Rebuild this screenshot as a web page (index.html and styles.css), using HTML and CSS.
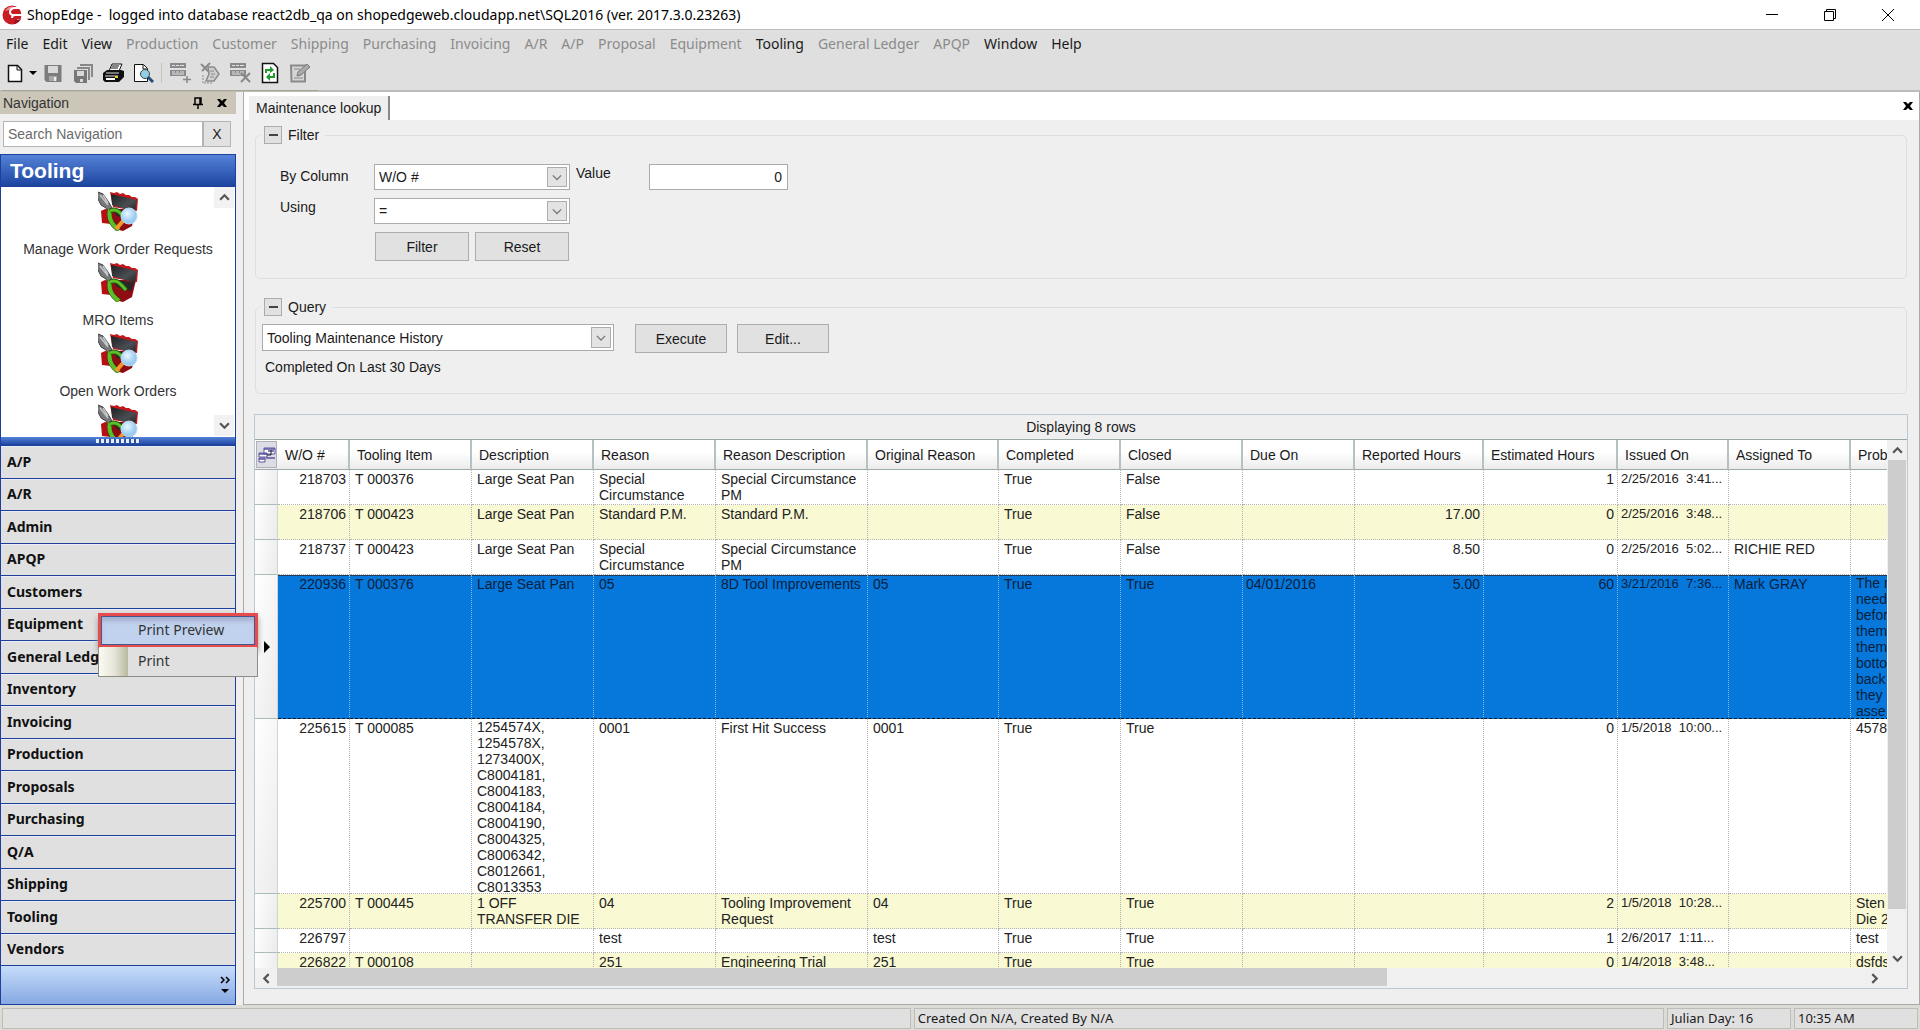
FILE: index.html
```html
<!DOCTYPE html>
<html lang="en">
<head>
<meta charset="utf-8">
<title>ShopEdge</title>
<link rel="stylesheet" href="styles.css">
</head>
<body>
<svg class="defs" aria-hidden="true">
  <defs>
    <linearGradient id="box" x1="0" y1="0" x2="1" y2="1"><stop offset="0" stop-color="#1d1f22"/><stop offset=".6" stop-color="#4a4d52"/><stop offset="1" stop-color="#222"/></linearGradient>
    <radialGradient id="glass" cx=".4" cy=".35"><stop offset="0" stop-color="#eaf7ff"/><stop offset="1" stop-color="#9accf2"/></radialGradient>
    <symbol id="tool" viewBox="0 0 40 40">
      <path d="M3 20l4-2 6 1v14l-9-1z" fill="#b80f14"/>
      <path d="M12 18l26 0-4 17-9 5-8-2-5-6z" fill="#8f0c12"/>
      <path d="M12 1l4 1 3-1 3 2 3-1 3 2 3 0 3 2 3 0 3 2-1 12-24-4z" fill="#c4161b"/>
      <path d="M13 3l26 6-2 12-23-7z" fill="url(#box)"/>
      <path d="M14 17l22 4-3 8-14-4z" fill="#26282b"/>
      <path d="M0 1l5 2 5 7 4 7 0 4-3 0-3-4-5-3-4-8z" fill="#77797b" stroke="#3f4143"/>
      <path d="M2 4l8 10M5 4l5 8" stroke="#c3c5c6" stroke-width="1.5"/>
      <path d="M12 19c-2 8 2 15 9 20" fill="none" stroke="#234d12" stroke-width="5"/>
      <path d="M12 19c-2 8 2 15 9 20" fill="none" stroke="#5cbf26" stroke-width="4"/>
      <path d="M12 20c6-3 10 1 16 8" fill="none" stroke="#234d12" stroke-width="5"/>
      <path d="M12 20c6-3 10 1 16 8" fill="none" stroke="#5cbf26" stroke-width="3"/>
    </symbol>
    <symbol id="tool-find" viewBox="0 0 40 40">
      <use href="#tool"/>
      <path d="M18 38l7-8" stroke="#f0982c" stroke-width="4"/>
      <circle cx="31" cy="25" r="8" fill="url(#glass)" stroke="#b7d9ee"/>
    </symbol>
    <symbol id="up" viewBox="0 0 10 10"><path d="M1 7l4-4 4 4" fill="none" stroke="#555" stroke-width="2"/></symbol>
    <symbol id="down" viewBox="0 0 10 10"><path d="M1 3l4 4 4-4" fill="none" stroke="#555" stroke-width="2"/></symbol>
    <symbol id="left" viewBox="0 0 10 10"><path d="M7 1L3 5l4 4" fill="none" stroke="#555" stroke-width="2"/></symbol>
    <symbol id="right" viewBox="0 0 10 10"><path d="M3 1l4 4-4 4" fill="none" stroke="#555" stroke-width="2"/></symbol>
    <symbol id="drop" viewBox="0 0 12 12"><path d="M1 4l5 5 5-5" fill="none" stroke="#777" stroke-width="1.5"/></symbol>
    <symbol id="cross" viewBox="0 0 12 12"><path d="M1 2h3l2 2 2-2h3L8 6l3 4H8L6 8l-2 2H1l3-4z" fill="#000"/></symbol>
    <symbol id="rows" viewBox="0 0 22 22">
      <path d="M1 1h16v5H1zM1 8h16v6H1z" fill="#8a8a8a"/>
      <path d="M3 3.500h3M7 3.500h3M11 3.500h4M3 10h3M7 10h3M11 10h4M3 12h12" stroke="#e4e4e4"/>
    </symbol>
  </defs>
</svg>

<header class="titlebar">
  <svg class="logo" viewBox="0 0 20 20"><circle cx="10" cy="10" r="9.500" fill="#c81d25"/><path d="M3 6Q8-1 13 3 8 5 3 6z" fill="#f08a8a"/><path d="M20 3h-8q-4 1-4 4t4 3h8M20 10h-7q-3 0-3 3M20 15h-5" fill="none" stroke="#fff" stroke-width="2"/><path d="M12 19q5-1 7-5l-6 1z" fill="#9c1118"/></svg>
  <h1 class="caption">ShopEdge - &nbsp;logged into database react2db_qa on shopedgeweb.cloudapp.net\SQL2016 (ver. 2017.3.0.23263)</h1>
  <button class="win" aria-label="Minimize"><svg viewBox="0 0 14 14"><path d="M1 6.500h12" stroke="#000"/></svg></button>
  <button class="win" aria-label="Restore"><svg viewBox="0 0 14 14"><path d="M1.500 3.500h9v9h-9zM3.500 3.500v-2h9v9h-2" fill="none" stroke="#000"/></svg></button>
  <button class="win" aria-label="Close"><svg viewBox="0 0 14 14"><path d="M1 1l12 12M13 1L1 13" stroke="#000"/></svg></button>
</header>

<nav class="menubar">
  <button>File</button><button>Edit</button><button>View</button><button disabled>Production</button><button disabled>Customer</button><button disabled>Shipping</button><button disabled>Purchasing</button><button disabled>Invoicing</button><button disabled>A/R</button><button disabled>A/P</button><button disabled>Proposal</button><button disabled>Equipment</button><button>Tooling</button><button disabled>General Ledger</button><button disabled>APQP</button><button>Window</button><button>Help</button>
</nav>

<div class="toolbar-row">
  <div class="toolbar">
    <button aria-label="New"><svg viewBox="0 0 22 22"><path d="M4.500 3.500h9l4 4v12h-13z" fill="#fff" stroke="#111" stroke-width="1.500"/><path d="M13 4v4h4" fill="none" stroke="#111"/></svg></button>
    <button class="slim" aria-label="New options"><svg viewBox="0 0 8 8"><path d="M0 2h8L4 6z"/></svg></button>
    <button aria-label="Save"><svg viewBox="0 0 22 22"><path d="M2.500 3h17v17h-15l-2-2z" fill="#7d7d7d"/><path d="M6 4h10v7H6z" fill="#d9d9d9"/><path d="M7 14h8v5H7z" fill="#a8a8a8"/><path d="M12 15h2v4h-2z" fill="#eee"/></svg></button>
    <button aria-label="Save all"><svg viewBox="0 0 22 22"><path d="M8 2h13v13h-2V4H8zM5 5h13v13h-2V7H5z" fill="#888"/><path d="M2 8h13v13H4l-2-2z" fill="#777"/><path d="M5 9h7v5H5zM8 17h3v3H8z" fill="#d9d9d9"/></svg></button>
    <button aria-label="Print"><svg viewBox="0 0 22 22"><path d="M7 9l3-7h10l-3 7z" fill="#fff" stroke="#111"/><path d="M10 4h7M9 6h7" stroke="#111"/><path d="M1 11l4-3h14l3 1v6l-5 5H3l-2-2z" fill="#111"/><path d="M4 11h13M3 14h13" stroke="#ddd"/><path d="M4 17h9" stroke="#fff" stroke-width="2"/><path d="M13 15h3" stroke="#e8d020" stroke-width="2"/></svg></button>
    <button aria-label="Print preview"><svg viewBox="0 0 22 22"><path d="M2.500 2.500h9l4 4v13h-13z" fill="#fff" stroke="#111"/><path d="M11 3v4h4" fill="none" stroke="#111"/><circle cx="13" cy="12" r="4.500" fill="#8fd0e4" stroke="#444"/><path d="M16 15l5 5" stroke="#234e78" stroke-width="3"/></svg></button>
    <span class="sep"></span>
    <button disabled aria-label="Add row"><svg viewBox="0 0 22 22"><use href="#rows"/><path d="M18 14v7M14 17.500h8" stroke="#888" stroke-width="1.500"/></svg></button>
    <button disabled aria-label="Cut row"><svg viewBox="0 0 22 22"><path d="M2 2l8 8M11 1L3 9" stroke="#8a8a8a" stroke-width="2"/><path d="M9 5h6l5 7-5 7H7l3-7z" fill="#cfcfcf" stroke="#8a8a8a" stroke-width="1.500"/><path d="M11 9h4M12 12h4M11 15h4" stroke="#8a8a8a"/><path d="M4 13v8h10" fill="none" stroke="#8a8a8a" stroke-dasharray="2 1"/></svg></button>
    <button disabled aria-label="Delete row"><svg viewBox="0 0 22 22"><use href="#rows"/><path d="M12 11l9 9M21 11l-9 9" stroke="#888" stroke-width="2"/></svg></button>
    <button aria-label="Refresh"><svg viewBox="0 0 22 22"><path d="M3.500 1.500h11l4 4v15h-15z" fill="#fff" stroke="#111" stroke-width="1.500"/><path d="M7 11V8h5M15 11v4h-5" fill="none" stroke="#1f9a2c" stroke-width="2"/><path d="M11 4l4 4-4 3zM11 11l-4 4 4 4z" fill="#1f9a2c"/></svg></button>
    <button disabled aria-label="Edit"><svg viewBox="0 0 22 22"><path d="M2 3.500h14v16H2.500z" fill="#d4d4d4" stroke="#8a8a8a" stroke-width="2"/><path d="M5 16h9M5 7h6" stroke="#8a8a8a"/><path d="M8 14l1-4 9-8 3 3-9 8z" fill="#aaa" stroke="#777"/></svg></button>
  </div>
</div>

<main class="work">
  <aside class="side">
    <div class="side-head"><h2>Navigation</h2>
      <button aria-label="Pin"><svg viewBox="0 0 12 12"><path d="M3 7V1h6v6M1 7.500h10M6 7v5M8 1v6" fill="none" stroke="#000" stroke-width="1.500"/></svg></button>
      <button aria-label="Close navigation"><svg viewBox="0 0 12 12"><use href="#cross"/></svg></button>
    </div>
    <div class="search"><input type="text" placeholder="Search Navigation" aria-label="Search Navigation"><button>X</button></div>
    <section class="outlook">
      <h2 class="band">Tooling</h2>
      <div class="tiles">
        <a href="#" class="tile"><svg><use href="#tool-find"/></svg>Manage Work Order Requests</a>
        <a href="#" class="tile"><svg><use href="#tool"/></svg>MRO Items</a>
        <a href="#" class="tile"><svg><use href="#tool-find"/></svg>Open Work Orders</a>
        <a href="#" class="tile" aria-label="More tooling"><svg><use href="#tool-find"/></svg></a>
        <button class="step top" aria-label="Scroll up"><svg><use href="#up"/></svg></button>
        <button class="step bottom" aria-label="Scroll down"><svg><use href="#down"/></svg></button>
      </div>
      <div class="splitter"><span></span></div>
      <div class="cats">
        <button>A/P</button><button>A/R</button><button>Admin</button><button>APQP</button><button>Customers</button><button>Equipment</button><button>General Ledger</button><button>Inventory</button><button>Invoicing</button><button>Production</button><button>Proposals</button><button>Purchasing</button><button>Q/A</button><button>Shipping</button><button>Tooling</button><button>Vendors</button>
      </div>
      <div class="overflow"><button aria-label="Configure buttons"><svg viewBox="0 0 12 20"><path d="M2 2l3 3-3 3M7 2l3 3-3 3" fill="none" stroke="#000" stroke-width="1.500"/><path d="M2 14h8l-4 4z"/></svg></button></div>
    </section>
  </aside>

  <section class="doc">
    <div class="tabs"><button class="tab">Maintenance lookup</button><button class="tab-close" aria-label="Close tab"><svg><use href="#cross"/></svg></button></div>
    <div class="doc-body">
      <fieldset class="group">
        <legend><button class="toggle" aria-label="Collapse filter"></button>Filter</legend>
        <div class="filter">
          <label for="col" class="mid">By Column</label>
          <span class="combo"><select id="col"><option>W/O #</option></select><svg><use href="#drop"/></svg></span>
          <label for="val">Value</label>
          <input id="val" class="num" type="text" value="0">
          <label for="op">Using</label>
          <span class="combo"><select id="op"><option>=</option></select><svg><use href="#drop"/></svg></span>
          <div class="actions"><button class="btn">Filter</button><button class="btn">Reset</button></div>
        </div>
      </fieldset>
      <fieldset class="group query">
        <legend><button class="toggle" aria-label="Collapse query"></button>Query</legend>
        <div class="query-row">
          <span class="combo wide"><select aria-label="Query"><option>Tooling Maintenance History</option></select><svg><use href="#drop"/></svg></span>
          <button class="btn">Execute</button><button class="btn">Edit...</button>
        </div>
        <p>Completed On Last 30 Days</p>
      </fieldset>

      <div class="grid">
        <div class="grid-caption">Displaying 8 rows</div>
        <div class="grid-main">
          <div class="viewport">
            <table>
              <colgroup><col class="w-mark"><col class="w-wo"><col class="w-text"><col class="w-text"><col class="w-text"><col class="w-reason"><col class="w-orig"><col class="w-text"><col class="w-text"><col class="w-due"><col class="w-rep"><col class="w-est"><col class="w-date"><col class="w-text"><col class="w-prob"></colgroup>
              <thead><tr><th class="chooser"><button aria-label="Choose columns"><svg viewBox="0 0 18 18"><path d="M6 2h11v6H6zM1 7h8v4H1zM1 12h6v4H1z" fill="#fff" stroke="#5a55a0"/><path d="M6 3h11M1 8h8M1 13h6M8 12h9M10 5h6" stroke="#5a55a0" stroke-width="1.500"/><path d="M9 9h4V4" fill="none" stroke="#223"/></svg></button></th><th>W/O #</th><th>Tooling Item</th><th>Description</th><th>Reason</th><th>Reason Description</th><th>Original Reason</th><th>Completed</th><th>Closed</th><th>Due On</th><th>Reported Hours</th><th>Estimated Hours</th><th>Issued On</th><th>Assigned To</th><th>Prob</th></tr></thead>
              <tbody>
                <tr class="two"><th></th><td class="r">218703</td><td>T 000376</td><td>Large Seat Pan</td><td>Special Circumstance</td><td>Special Circumstance PM</td><td></td><td>True</td><td>False</td><td></td><td></td><td class="r">1</td><td class="date">2/25/2016  3:41...</td><td></td><td></td></tr>
                <tr class="two alt"><th></th><td class="r">218706</td><td>T 000423</td><td>Large Seat Pan</td><td>Standard P.M.</td><td>Standard P.M.</td><td></td><td>True</td><td>False</td><td></td><td class="r">17.00</td><td class="r">0</td><td class="date">2/25/2016  3:48...</td><td></td><td></td></tr>
                <tr class="two"><th></th><td class="r">218737</td><td>T 000423</td><td>Large Seat Pan</td><td>Special Circumstance</td><td>Special Circumstance PM</td><td></td><td>True</td><td>False</td><td></td><td class="r">8.50</td><td class="r">0</td><td class="date">2/25/2016  5:02...</td><td>RICHIE RED</td><td></td></tr>
                <tr class="nine selected"><th><svg viewBox="0 0 6 12"><path d="M0 0l6 6-6 6z"/></svg></th><td class="r">220936</td><td>T 000376</td><td>Large Seat Pan</td><td>05</td><td class="one">8D Tool Improvements</td><td>05</td><td>True</td><td>True</td><td class="due">04/01/2016</td><td class="r">5.00</td><td class="r">60</td><td class="date">3/21/2016  7:36...</td><td>Mark GRAY</td><td class="tall"><div class="lines">The r<br>need<br>befor<br>them<br>them<br>botto<br>back<br>they<br>asse</div></td></tr>
                <tr class="eleven"><th></th><td class="r">225615</td><td>T 000085</td><td class="tall"><div class="lines">1254574X,<br>1254578X,<br>1273400X,<br>C8004181,<br>C8004183,<br>C8004184,<br>C8004190,<br>C8004325,<br>C8006342,<br>C8012661,<br>C8013353</div></td><td>0001</td><td>First Hit Success</td><td>0001</td><td>True</td><td>True</td><td></td><td></td><td class="r">0</td><td class="date">1/5/2018  10:00...</td><td></td><td>4578</td></tr>
                <tr class="two alt"><th></th><td class="r">225700</td><td>T 000445</td><td>1 OFF<br>TRANSFER DIE</td><td>04</td><td>Tooling Improvement Request</td><td>04</td><td>True</td><td>True</td><td></td><td></td><td class="r">2</td><td class="date">1/5/2018  10:28...</td><td></td><td>Sten<br>Die 2</td></tr>
                <tr class="single"><th></th><td class="r">226797</td><td></td><td></td><td>test</td><td></td><td>test</td><td>True</td><td>True</td><td></td><td></td><td class="r">1</td><td class="date">2/6/2017  1:11...</td><td></td><td>test</td></tr>
                <tr class="single alt"><th></th><td class="r">226822</td><td>T 000108</td><td></td><td>251</td><td>Engineering Trial</td><td>251</td><td>True</td><td>True</td><td></td><td></td><td class="r">0</td><td class="date">1/4/2018  3:48...</td><td></td><td>dsfds</td></tr>
              </tbody>
            </table>
          </div>
          <div class="vbar"><button aria-label="Scroll rows up"><svg><use href="#up"/></svg></button><span class="track"><span class="thumb"></span></span><button aria-label="Scroll rows down"><svg><use href="#down"/></svg></button></div>
        </div>
        <div class="hbar"><button aria-label="Scroll left"><svg><use href="#left"/></svg></button><span class="track"><span class="thumb"></span></span><button aria-label="Scroll right"><svg><use href="#right"/></svg></button></div>
      </div>
    </div>
  </section>
</main>

<footer class="status"><span class="grow-a"></span><span class="grow-b">Created On N/A, Created By N/A</span><span class="fix">Julian Day: 16</span><span class="fix">10:35 AM</span></footer>

<div class="popup" role="menu"><button role="menuitem" class="hot">Print Preview</button><button role="menuitem" class="cold">Print</button></div>
</body>
</html>
```
FILE: styles.css
```css
* { box-sizing: border-box; }
body {
  margin: 0;
  height: 100vh;
  display: flex;
  flex-direction: column;
  position: relative;
  overflow: hidden;
  background: #dfdfdf;
  color: #1a1a1a;
  font: 14px/16px "Liberation Sans", Arial, sans-serif;
}
h1, h2, p { margin: 0; font-size: inherit; font-weight: normal; }
button { font: inherit; color: inherit; margin: 0; padding: 0; border: 0; background: none; }
input, select { font: inherit; color: inherit; margin: 0; }
svg { display: block; }
.defs { position: absolute; width: 0; height: 0; }

/* Title bar */
.titlebar { display: flex; align-items: center; height: 30px; padding-right: 3px; background: #fff; border-bottom: 1px solid #bdbfbf; font: 14px/20px "Noto Sans", sans-serif; color: #000; }
.logo { width: 20px; height: 20px; margin: 0 5px 0 2px; }
.caption { flex: 1; white-space: nowrap; }
.win { width: 58px; height: 29px; display: grid; place-items: center; }
.win svg { width: 14px; height: 14px; }

/* Menu and toolbar */
.menubar { display: flex; height: 28px; align-items: center; font: 14px/20px "Noto Sans", sans-serif; }
.menubar button { padding: 0 7px 0 6px; margin-right: 1px; white-space: nowrap; }
.menubar button:disabled { color: #8b8b8b; }
.toolbar-row { height: 34px; border-bottom: 2px solid #bcbcbc; }
.toolbar { display: flex; align-items: center; width: 316px; height: 33px; margin-left: 2px; padding: 0 2px 2px 0; border-bottom: 1px solid #a8a88e; }
.toolbar button { width: 30px; height: 30px; display: grid; place-items: center; flex: none; }
.toolbar button:first-child { width: 26px; }
.toolbar .slim { width: 10px; }
.toolbar svg { width: 22px; height: 22px; }
.toolbar .slim svg { width: 8px; height: 8px; }
.sep { width: 1px; height: 20px; margin: 0 3px; background: #c6c6b8; }

/* Work area */
.work { flex: 1; min-height: 0; display: flex; background: #efefef; }
.side { width: 236px; flex: none; display: flex; flex-direction: column; }
.side-head { display: flex; align-items: center; height: 22px; padding: 0 8px 0 3px; gap: 12px; background: #cbc6b8; }
.side-head h2 { flex: 1; color: #333; }
.side-head svg { width: 12px; height: 12px; }
.search { display: flex; height: 26px; margin: 7px 5px 7px 3px; }
.search input { flex: 1; min-width: 0; padding: 0 4px; border: 1px solid #b4b4b4; background: #fff; }
.search input::placeholder { color: #6b6b6b; opacity: 1; }
.search button { width: 28px; border: 1px solid #b4b4b4; background: #e1e1e1; }
.outlook { flex: 1; min-height: 0; display: flex; flex-direction: column; border: 1px solid #1f3f9c; }
.band { height: 32px; padding-left: 9px; font: bold 21px/31px "Liberation Sans", Arial, sans-serif; color: #fff; background: linear-gradient(#5482d8, #1d45a0); border-bottom: 1px solid #1f3f9c; }
.tiles { position: relative; height: 250px; overflow: hidden; background: #fff; padding-top: 4px; }
.tile { display: flex; flex-direction: column; align-items: center; gap: 10px; height: 71px; color: #333; text-decoration: none; }
.tile svg { width: 40px; height: 40px; flex: none; }
.step { position: absolute; right: 1px; width: 20px; height: 21px; display: grid; place-items: center; background: #f2f2f2; }
.step svg, .vbar svg, .hbar svg { width: 11px; height: 11px; }
.step.top { top: 0; }
.step.bottom { bottom: 1px; }
.splitter { height: 8px; display: grid; place-items: center; background: linear-gradient(#5482d8, #1d45a0); }
.splitter span { width: 44px; height: 4px; background: repeating-linear-gradient(90deg, #e6ecf8 0 3px, #2c50a0 3px 5px); }
.cats { flex: 1; display: flex; flex-direction: column; min-height: 0; }
.cats button { flex: 1; padding: 0 6px; text-align: left; font: bold 14px/20px "Noto Sans", sans-serif; color: #111; background: #e0e0e0; border-top: 1px solid #1f3f9c; box-shadow: inset 0 1px #e9edf6; }
.overflow { height: 39px; display: flex; justify-content: flex-end; align-items: center; padding-right: 4px; border-top: 1px solid #1f3f9c; background: linear-gradient(#c6dcfa, #86a9e2); }
.overflow svg { width: 12px; height: 20px; }

/* Document */
.doc { flex: 1; min-width: 0; margin-left: 7px; display: flex; flex-direction: column; border: 1px solid #a9a9a9; border-top: 0; }
.tabs { display: flex; align-items: flex-end; justify-content: space-between; height: 28px; padding-left: 5px; background: #fff; }
.tab { height: 24px; padding: 0 7px; background: #efefef; border-right: 2px solid #888; }
.tab-close { width: 22px; height: 28px; display: grid; place-items: center; }
.tab-close svg { width: 12px; height: 12px; }
.doc-body { flex: 1; min-height: 0; display: flex; flex-direction: column; padding: 6px 11px 15px 10px; }
.group { margin: 0 1px; padding: 20px 3px 17px 4px; border: 1px solid #dcdfe2; border-radius: 5px; min-width: 0; }
.group legend { display: flex; align-items: center; gap: 6px; height: 18px; padding: 0 6px 0 4px; }
.toggle { width: 18px; height: 18px; display: grid; place-items: center; border: 1px solid #adadad; background: #e1e1e1; }
.toggle::before { content: ""; width: 9px; height: 2px; background: #444; }
.filter { display: grid; grid-template-columns: 94px 196px 79px 139px; grid-template-rows: 26px 26px 29px; row-gap: 8px; margin-left: 20px; }
.filter label { line-height: 18px; }
.filter .mid { line-height: 25px; }
.filter label[for="val"] { padding-left: 6px; }
.combo { position: relative; display: block; height: 26px; }
.combo select { width: 100%; height: 100%; padding: 0 24px 0 4px; appearance: none; border: 1px solid #ababab; border-radius: 0; background: #fff; }
.combo svg { position: absolute; top: 3px; right: 3px; width: 20px; height: calc(100% - 6px); padding: 4px; border: 1px solid #adadad; background: #e3e3e3; pointer-events: none; }
.num { border: 1px solid #ababab; background: #fff; text-align: right; padding: 0 5px; }
.actions { grid-column: 2; grid-row: 3; display: flex; gap: 6px; padding: 0 1px; }
.btn { flex: 1; border: 1px solid #adadad; background: #e1e1e1; }
.query { margin-top: 19px; padding: 8px 3px 18px 4px; }
.query-row { display: flex; align-items: flex-start; margin-left: 2px; gap: 10px; }
.query-row .btn { flex: none; width: 92px; height: 29px; }
.combo.wide { width: 352px; height: 27px; margin-right: 11px; }
.query p { padding: 6px 5px 0; }

/* Data grid */
.grid { flex: 1; min-height: 0; margin-top: 20px; display: flex; flex-direction: column; border: 1px solid #b9c8d2; }
.grid-caption { height: 25px; line-height: 25px; text-align: center; border-bottom: 1px solid #98a8a8; }
.grid-main { flex: 1; min-height: 0; display: flex; }
.viewport { flex: 1; min-width: 0; overflow: hidden; background: #fff; }
table { table-layout: fixed; width: 1697px; border-collapse: separate; border-spacing: 0; }
.w-mark { width: 23px; } .w-wo { width: 72px; } .w-text { width: 122px; } .w-reason { width: 152px; }
.w-orig { width: 131px; } .w-due { width: 112px; } .w-rep { width: 129px; } .w-est { width: 134px; }
.w-date { width: 111px; } .w-prob { width: 123px; }
thead th { height: 30px; padding: 0 7px; text-align: left; font-weight: normal; white-space: nowrap; background: linear-gradient(#fff 40%, #ececec); border-right: 2px solid #b4c2c2; border-bottom: 1px solid #9aabab; }
thead .chooser { padding: 0 0 0 1px; border-right: 0; }
.chooser button { width: 21px; height: 27px; display: grid; place-items: center; background: #dcdce4; border: 1px solid #b0b0b8; }
.chooser svg { width: 18px; height: 18px; }
tbody th { background: linear-gradient(100deg, #fff, #ebebeb); border-bottom: 1px solid #a9bcbc; border-right: 1px solid #cfd4d4; padding: 0 0 0 9px; }
tbody th svg { width: 6px; height: 12px; }
td { padding: 1px 3px 0 5px; vertical-align: top; border-right: 1px dotted #b4b4b4; border-bottom: 1px dotted #b4b4b4; color: #222; }
.two { height: 35px; } .nine { height: 144px; } .eleven { height: 175px; } .single { height: 24px; }
.alt td { background: #f9f9d3; }
.r { text-align: right; }
.date { padding: 1px 0 0 3px; font-size: 13px; white-space: pre; }
.due { padding-left: 3px; }
.one { white-space: nowrap; }
.tall { padding-top: 0; }
.lines { white-space: nowrap; overflow: hidden; }
.nine .lines { max-height: 143px; }
.eleven .lines { max-height: 174px; }
.selected td { background: #0677db; color: #08213d; border-bottom: 1px dashed #111; border-right-color: #7db8ee; box-shadow: inset 0 1px #223a55; }
.vbar { width: 20px; display: flex; flex-direction: column; align-items: center; background: #f0f0f0; }
.vbar button { width: 18px; height: 20px; display: grid; place-items: center; }
.vbar .track { flex: 1; width: 18px; }
.vbar .thumb { display: block; height: 92%; background: #cdcdcd; }
.hbar { height: 20px; display: flex; padding-right: 22px; background: #f0f0f0; }
.hbar button { width: 22px; display: grid; place-items: center; }
.hbar .track { flex: 1; }
.hbar .thumb { display: block; width: 70%; height: 18px; background: #cdcdcd; }

/* Status bar */
.status { height: 25px; display: flex; gap: 3px; padding: 3px 2px 1px; font: 13px/18px "Noto Sans", sans-serif; background: #dcdcd6; }
.status span { padding: 0 3px; border: 1px solid #bdbdb6; background: #e0e0e0; white-space: nowrap; }
.grow-a { flex: 910; }
.grow-b { flex: 750; }
.fix { width: 124px; }

/* Context menu */
.popup { position: absolute; left: 98px; top: 613px; width: 160px; display: flex; flex-direction: column; font: 14px/20px "Noto Sans", sans-serif; color: #333; background: #e0e0e0; border: 1px solid #8d8d86; }
.popup button { height: 29px; padding: 0 0 2px 39px; text-align: left; }
.popup .hot { height: 35px; margin: -1px; padding-left: 37px; border: 3px solid #e84b4b; background: #c1d2ee; box-shadow: inset 0 0 0 1px #45578f, inset 0 5px 4px #a3b0cf, 0 4px 6px #9a9a9a; }
.popup .cold { background: linear-gradient(90deg, #fbfbf4, #e4e4d6 16px, #b9b89f 29px, #e0e0e0 29px); }
```
